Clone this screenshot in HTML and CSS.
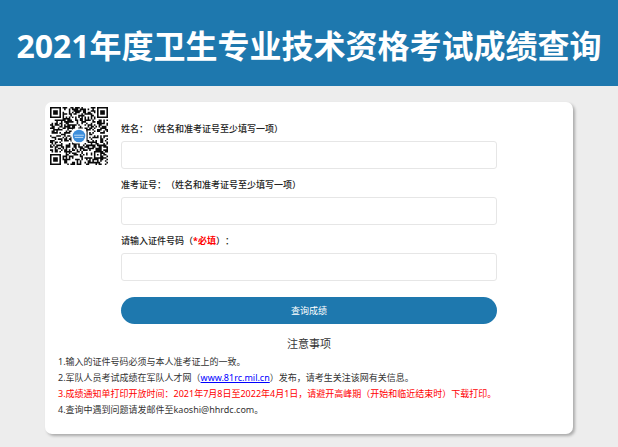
FILE: index.html
```
<!DOCTYPE html>
<html lang="zh-CN">
  <head>
    <meta charset="UTF-8" />
    <meta name="viewport" content="width=device-width, initial-scale=1.0" />
    <title>2021年度卫生专业技术资格考试成绩查询</title>
    <link rel="stylesheet" href="styles.css">
  </head>
  <body>
    <header class="header">
      <h1 class="header-title">2021年度卫生专业技术资格考试成绩查询</h1>
    </header>
    <main class="main">
      <div class="card">
        <div class="card-top">
          <svg class="qrcode" viewBox="0 0 37 37" role="img">
            <path id="qrModules" fill="#0a0a0a" />
            <rect x="13.7" y="13.7" width="9.6" height="9.6" rx="2.4" fill="#fff" />
            <circle cx="18.5" cy="18.5" r="4" fill="#3d8edb" />
            <path d="M15.4 18h6.2M15.8 19.4h5.4" stroke="#c5dff6" stroke-width=".6" />
          </svg>
          <form class="query-form" id="queryForm">
            <label class="label" for="name">姓名：（姓名和准考证号至少填写一项）</label>
            <input class="input" type="text" id="name" name="name">
            <label class="label" for="ticket">准考证号：（姓名和准考证号至少填写一项）</label>
            <input class="input" type="text" id="ticket" name="ticket">
            <label class="label" for="idcard">请输入证件号码（<span class="required">*必填</span>）：</label>
            <input class="input" type="text" id="idcard" name="idcard">
            <button class="submit-btn" type="submit">查询成绩</button>
          </form>
        </div>
        <section class="notice">
          <h2 class="notice-title">注意事项</h2>
          <p>1.输入的证件号码必须与本人准考证上的一致。</p>
          <p>2.军队人员考试成绩在军队人才网（<a class="link" href="http://www.81rc.mil.cn">www.81rc.mil.cn</a>）发布，请考生关注该网有关信息。</p>
          <p class="warn">3.成绩通知单打印开放时间：2021年7月8日至2022年4月1日，请避开高峰期（开始和临近结束时）下载打印。</p>
          <p>4.查询中遇到问题请发邮件至kaoshi@hhrdc.com。</p>
        </section>
      </div>
    </main>
    <script src="qrcode.js"></script>
  </body>
</html>
```
FILE: styles.css
```
* {
  margin: 0;
  padding: 0;
  box-sizing: border-box;
}
body {
  font-family: "Noto Sans", "Noto Sans CJK SC", sans-serif;
  font-size: 9px;
  line-height: 16px;
  color: #333;
  background: #ededed;
  text-spacing-trim: space-all;
}
.header {
  background: #1e78ae;
  padding: 22px 0 16px;
}
.header-title {
  font-size: 32px;
  line-height: 48px;
  font-weight: 700;
  color: #fff;
  text-align: center;
}
.main {
  padding: 16px 45px 12px;
}
.card {
  background: #fff;
  border-radius: 7px;
  padding-bottom: 16px;
  box-shadow: 2px 2px 3px rgba(0, 0, 0, 0.28);
}
.card-top {
  display: grid;
  grid-template-columns: 76px 1fr 76px;
  align-items: start;
}
.qrcode {
  width: 58px;
  height: 58px;
  margin: 5px 0 0 5px;
}
.query-form {
  padding-top: 19px;
}
.label {
  display: block;
  margin-bottom: 4px;
  font-weight: 500;
  color: #222;
}
.required {
  color: #f00;
  font-weight: 700;
}
.input {
  display: block;
  width: 100%;
  height: 28px;
  margin-bottom: 8px;
  padding: 0 8px;
  border: 1px solid #e6e6e6;
  border-radius: 3px;
  background: #fff;
  font: inherit;
}
.submit-btn {
  display: block;
  width: 100%;
  height: 27px;
  margin-top: 16px;
  border: none;
  border-radius: 14px;
  background: #1e78ae;
  color: #fff;
  font: inherit;
  cursor: pointer;
}
.notice {
  padding: 10px 13px 0;
}
.notice-title {
  font-size: 11px;
  line-height: 20px;
  font-weight: 400;
  text-align: center;
}
.link {
  color: #00f;
}
.warn {
  color: #f00;
}
```
FILE: qrcode.js
```
const size = 37;
const grid = [];
let seed = 2021;

// data modules
for (let y = 0; y < size; y++) {
  grid[y] = [];
  for (let x = 0; x < size; x++) {
    seed = (seed * 1103515245 + 12345) % 2147483648;
    grid[y][x] = seed / 2147483648 < 0.52;
  }
}

// concentric square with a white ring round it
function drawSquare(cx, cy, radius, rings) {
  for (let y = cy - radius; y <= cy + radius; y++) {
    for (let x = cx - radius; x <= cx + radius; x++) {
      if (grid[y] && x >= 0 && x < size) {
        const d = Math.max(Math.abs(x - cx), Math.abs(y - cy));
        grid[y][x] = rings.includes(d);
      }
    }
  }
}

for (let i = 8; i < size - 8; i++) {
  grid[6][i] = i % 2 === 0;
  grid[i][6] = i % 2 === 0;
}
drawSquare(3, 3, 4, [0, 1, 3]);
drawSquare(33, 3, 4, [0, 1, 3]);
drawSquare(3, 33, 4, [0, 1, 3]);
drawSquare(30, 30, 2, [0, 2]);

let d = "";
grid.forEach((row, y) => {
  row.forEach((on, x) => {
    if (on) d += `M${x} ${y}h1v1h-1z`;
  });
});
document.getElementById("qrModules").setAttribute("d", d);
```
